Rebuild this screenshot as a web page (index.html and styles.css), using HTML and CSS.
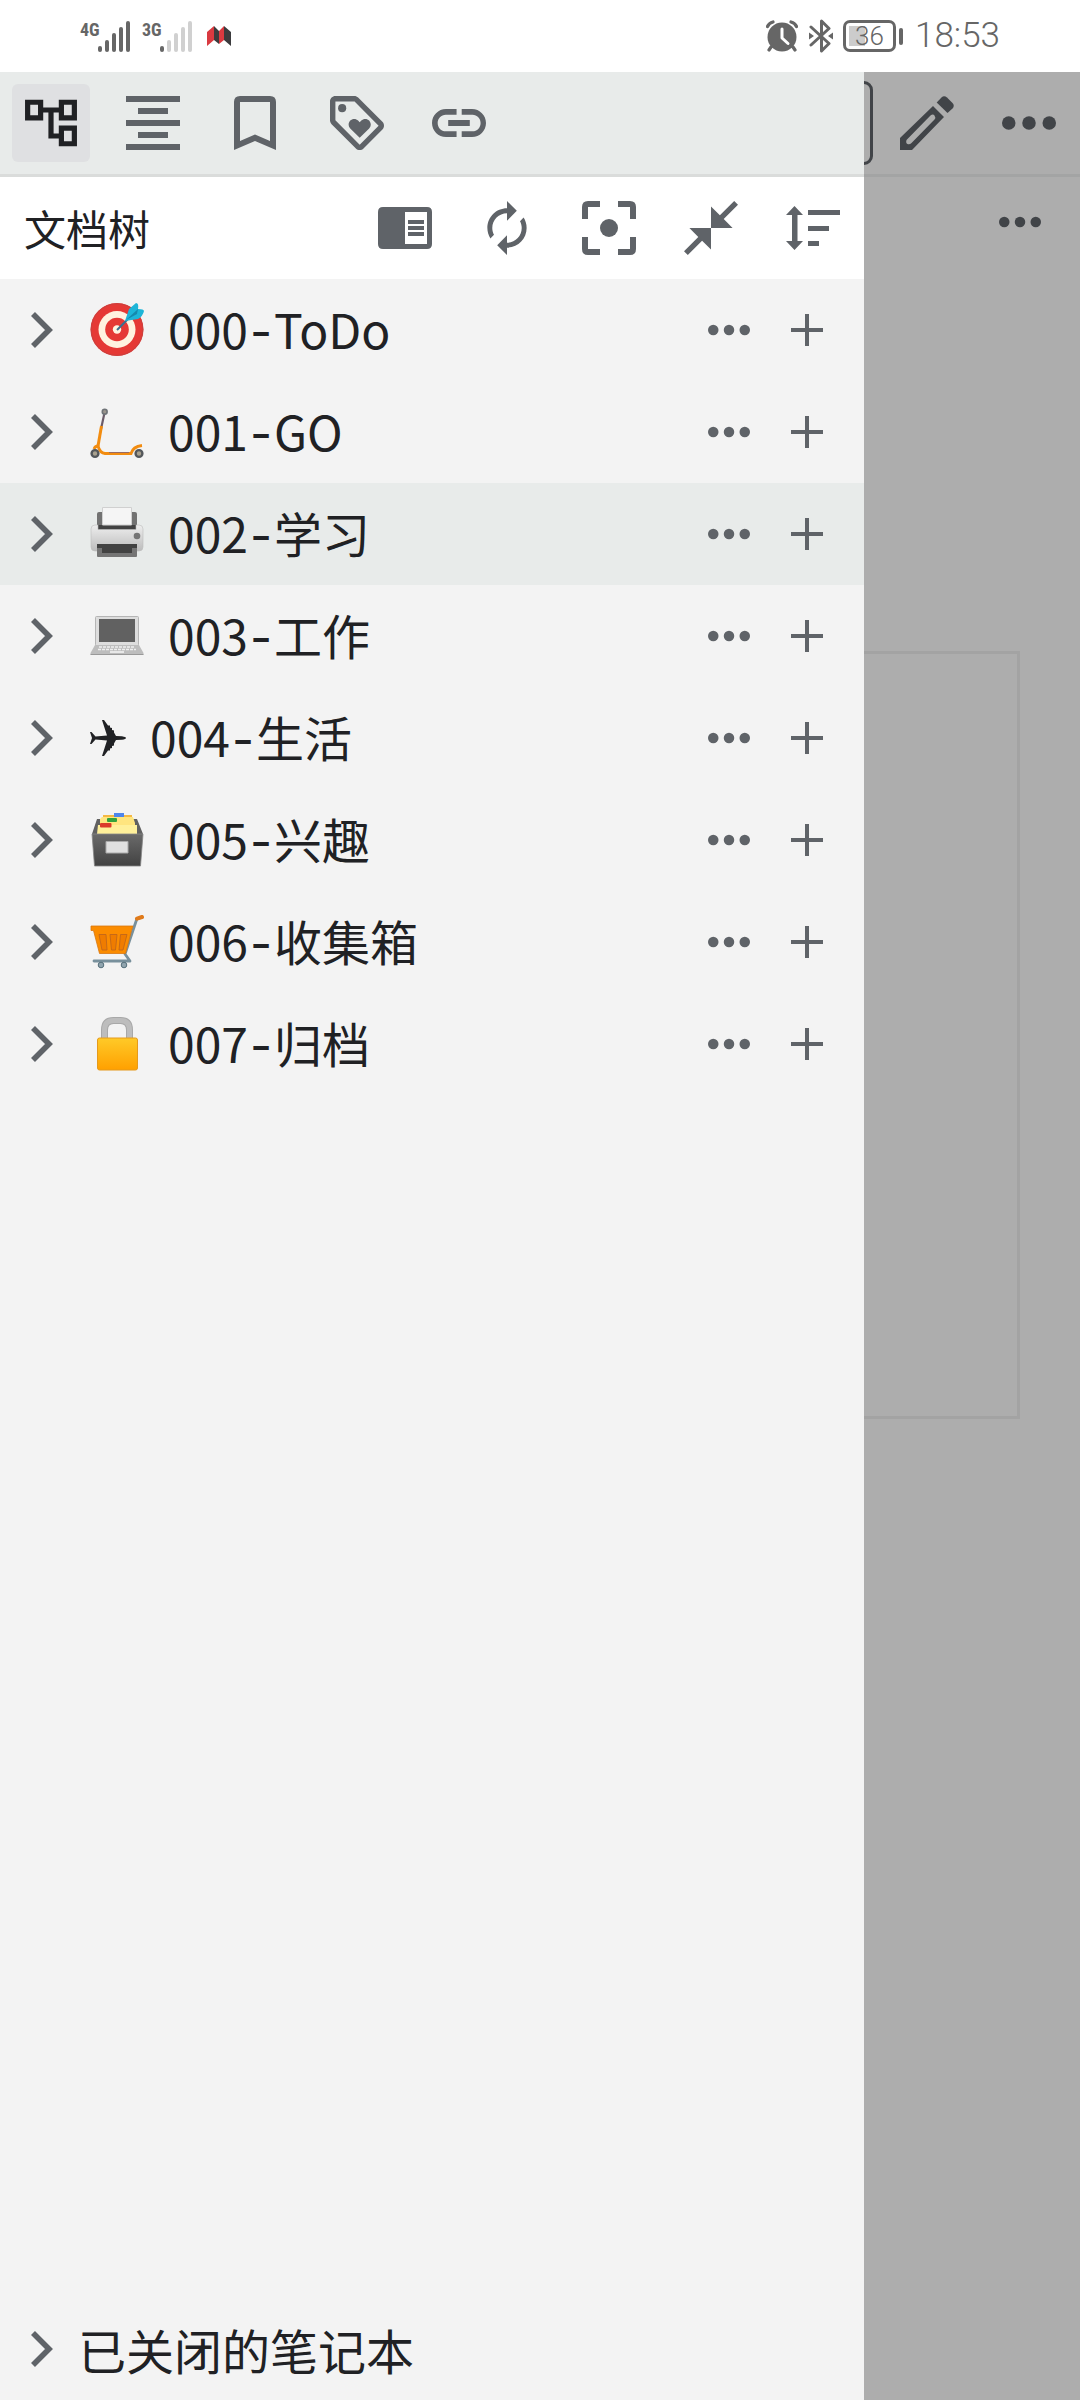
FILE: index.html
```html
<!DOCTYPE html>
<html lang="zh-CN">
<head>
<meta charset="utf-8">
<meta name="viewport" content="width=device-width">
<title>文档树</title>
<link rel="stylesheet" href="styles.css">
</head>
<body>
<svg class="defs" aria-hidden="true">
  <symbol id="chevron" viewBox="0 0 48 48"><path d="M15 8l16 16-16 16" fill="none" stroke="currentColor" stroke-width="5.6"/></symbol>
  <symbol id="dots" viewBox="0 0 54 54"><circle cx="6.75" cy="27" r="6.75"/><circle cx="27" cy="27" r="6.75"/><circle cx="47.25" cy="27" r="6.75"/></symbol>
  <symbol id="plus" viewBox="0 0 32 32"><path d="M14 0h4v14h14v4H18v14h-4V18H0v-4h14z"/></symbol>
</svg>

<header class="status">
  <div class="status-group">
    <span class="net">4G</span>
    <svg class="bars" viewBox="0 0 32 31"><g fill="#666"><rect y="25" width="4" height="6" rx="2"/><rect x="7" y="19" width="4" height="12" rx="2"/><rect x="14" y="12" width="4" height="19" rx="2"/><rect x="21" y="6" width="4" height="25" rx="2"/><rect x="28" width="4" height="31" rx="2"/></g></svg>
    <span class="net net-second">3G</span>
    <svg class="bars" viewBox="0 0 32 31"><rect y="25" width="4" height="6" rx="2" fill="#666"/><g fill="#d0d0d0"><rect x="7" y="19" width="4" height="12" rx="2"/><rect x="14" y="12" width="4" height="19" rx="2"/><rect x="21" y="6" width="4" height="25" rx="2"/><rect x="28" width="4" height="31" rx="2"/></g></svg>
    <svg class="brand" viewBox="0 0 24 20"><path d="M0 6l7-6v14l-7 6zM12 5l5-5v14l-5 4z" fill="#d93a40"/><path d="M7 0l5 5v13l-5-4zM17 0l7 6v14l-7-6z" fill="#3b3b3d"/></svg>
  </div>
  <div class="status-group">
    <svg class="alarm" viewBox="0 0 32 32"><circle cx="16" cy="17" r="14.5" fill="#666"/><path d="M5 27l-2 3M27 27l2 3M1.500 6.500Q3 3 7 2M30.500 6.500Q29 3 25 2" fill="none" stroke="#666" stroke-width="3.200" stroke-linecap="round"/><path d="M16 9v9l6 5.500" fill="none" stroke="#fff" stroke-width="3" stroke-linecap="round" stroke-linejoin="round"/></svg>
    <svg class="bluetooth" viewBox="0 0 24 34"><path d="M2 8l18 16.500-7.500 7.500V2L20 9.500 2 26" fill="none" stroke="#666" stroke-width="3" stroke-linejoin="round" stroke-linecap="round"/><path d="M0 13.500l5 3.500-5 3.500zM24 13.500L19 17l5 3.500z" fill="#666"/></svg>
    <span class="battery"><span class="battery-level">36</span></span>
    <time class="clock">18:53</time>
  </div>
</header>

<div class="app">
  <main class="editor">
    <div class="editor-bar">
      <input class="doc-title" type="text" aria-label="标题">
      <div class="tools">
        <button class="tool" aria-label="编辑"><svg class="icon" viewBox="0 0 54 54"><path fill-rule="evenodd" d="M0 42L33 10l11 11-32 33H0zM6.500 44q-1 3 1 4t4-1L34.500 23.500q1.500-2 0-4t-4 0z"/><path d="M36.700 6.500L41.500 1.500q2.500-2.500 5.500 0L52.500 7q2.500 2.500 0 5.500L47.500 17z"/></svg></button>
        <button class="tool" aria-label="更多"><svg class="icon"><use href="#dots"/></svg></button>
      </div>
    </div>
    <div class="crumbs"><button class="row-tool" aria-label="更多"><svg class="icon-more"><use href="#dots"/></svg></button></div>
    <div class="frame"></div>
  </main>

  <aside class="drawer">
    <nav class="tabs">
      <button class="tool tool-active" aria-label="文档树"><svg class="icon" viewBox="1.600 1.600 20.800 20.800"><path d="M22 11V3h-7v3H9V3H2v8h7V8h2v10h4v3h7v-8h-7v3h-2V8h2v3h7zM7 9H4V5h3v4zm10 6h3v4h-3v-4zm0-10h3v4h-3V5z"/></svg></button>
      <button class="tool" aria-label="大纲"><svg class="icon" viewBox="0 0 18 18"><path d="M0 0h18v2H0zM4 4h10v2H4zM0 8h18v2H0zM4 12h10v2H4zM0 16h18v2H0z"/></svg></button>
      <button class="tool" aria-label="书签"><svg class="icon" viewBox="0 0 54 54"><path fill-rule="evenodd" d="M12 0h30q6 0 6 6v48l-21-9-21 9V6q0-6 6-6zM12 6v39l15-6.500L42 45V6z"/></svg></button>
      <button class="tool" aria-label="标签"><svg class="icon" viewBox="2 2 20 20"><path d="M21.410 11.580l-9-9C12.050 2.220 11.550 2 11 2H4c-1.100 0-2 .9-2 2v7c0 .55.22 1.050.59 1.420l9 9c.36.36.86.58 1.410.58.55 0 1.050-.22 1.410-.59l7-7c.37-.36.59-.86.59-1.410 0-.55-.23-1.060-.59-1.420zM13 20.010L4 11V4h7v-.01l9 9-7 7.020z"/><circle cx="6.500" cy="6.500" r="1.500"/><path d="M8.900 12.550c0 .57.23 1.070.6 1.450l3.500 3.500 3.500-3.500c.37-.37.6-.89.6-1.450 0-1.130-.92-2.050-2.050-2.050-.57 0-1.080.23-1.450.6l-.6.6-.6-.59c-.37-.38-.89-.61-1.450-.61-1.130 0-2.050.92-2.050 2.050z"/></svg></button>
      <button class="tool" aria-label="反链"><svg class="icon" viewBox="2 2 20 20"><path d="M4.100 12c0-1.710 1.290-3.100 3-3.100h4V6.800H7.200c-2.900 0-5.200 2.340-5.200 5.200s2.300 5.200 5.200 5.200h3.900v-2.100h-4c-1.710 0-3-1.390-3-3.100zM8 13.100h8v-2.200H8v2.200zm8.800-6.300H13v2.100h4c1.710 0 3 1.390 3 3.100s-1.290 3.100-3 3.100h-4v2.100h3.800c2.900 0 5.200-2.340 5.200-5.200s-2.300-5.200-5.200-5.200z"/></svg></button>
    </nav>

    <div class="head">
      <h1 class="head-title">文档树</h1>
      <div class="tools">
        <button class="tool" aria-label="侧栏"><svg class="icon" viewBox="0 0 54 54"><path fill-rule="evenodd" d="M5 6h44q5 0 5 5v32q0 5-5 5H5q-5 0-5-5V11q0-5 5-5zM27 11v32h22V11z"/><path d="M30 19h16v4H30zM30 25h16v4H30zM30 31h16v4H30z"/></svg></button>
        <button class="tool" aria-label="刷新"><svg class="icon" viewBox="1 1 22 22"><path d="M12 6v3l4-4-4-4v3c-4.420 0-8 3.580-8 8 0 1.570.46 3.030 1.240 4.260L6.700 14.800c-.45-.83-.7-1.790-.7-2.800 0-3.310 2.690-6 6-6zm6.760 1.740L17.300 9.200c.44.84.7 1.790.7 2.800 0 3.310-2.690 6-6 6v-3l-4 4 4 4v-3c4.420 0 8-3.580 8-8 0-1.570-.46-3.030-1.240-4.260z"/></svg></button>
        <button class="tool" aria-label="定位"><svg class="icon" viewBox="3 3 18 18"><circle cx="12" cy="12" r="3"/><path d="M3 9V5q0-2 2-2h4v2H5v4zM15 3h4q2 0 2 2v4h-2V5h-4zM21 15v4q0 2-2 2h-4v-2h4v-4zM9 21H5q-2 0-2-2v-4h2v4h4z"/></svg></button>
        <button class="tool" aria-label="折叠"><svg class="icon" viewBox="2 2 20 20"><path d="M22 3.410L16.710 8.700 20 12h-8V4l3.290 3.290L20.590 2 22 3.410zM3.410 22l5.290-5.290L12 20v-8H4l3.290 3.290L2 20.590 3.410 22z"/></svg></button>
        <button class="tool" aria-label="排序"><svg class="icon" viewBox="0 0 54 54"><path d="M8.500 5l8.500 9h-5.500v26H17l-8.500 9L0 40h6V14H0zM22 9h32v5H22zM22 25h21v5H22zM22 40h11v5H22z"/></svg></button>
      </div>
    </div>

    <ul class="tree">
      <li class="row">
        <button class="toggle" aria-label="展开"><svg class="icon-chevron"><use href="#chevron"/></svg></button>
        <svg class="emoji" viewBox="0 0 54 54"><circle cx="27" cy="26.500" r="26.500" fill="#e53935"/><circle cx="27" cy="26.500" r="25.800" fill="none" stroke="#c9403e" stroke-width="1"/><circle cx="27" cy="26.500" r="18.500" fill="#fff3e0"/><circle cx="27" cy="26.500" r="11.800" fill="#e53935"/><circle cx="27" cy="26.500" r="4.200" fill="#fff3e0"/><path d="M27 27L39 15" stroke="#39708f" stroke-width="2"/><path d="M35 18l4-12 7-6q3 0 2 6 6 0 6 2-1 5-6 8z" fill="#1eb5d8"/><path d="M36 17L48 6l-1 5z" fill="#1689ad"/></svg>
        <span class="label">000<span class="dash">-</span>ToDo</span>
        <button class="row-tool" aria-label="更多"><svg class="icon-more"><use href="#dots"/></svg></button>
        <button class="row-tool" aria-label="新建"><svg class="icon-plus"><use href="#plus"/></svg></button>
      </li>
      <li class="row">
        <button class="toggle" aria-label="展开"><svg class="icon-chevron"><use href="#chevron"/></svg></button>
        <svg class="emoji" viewBox="0 0 54 54"><path d="M14.700 7L11 24" stroke="#6b5b68" stroke-width="2.200"/><circle cx="14.700" cy="6.700" r="3.200" fill="#6f7377"/><circle cx="14.700" cy="6.700" r="1.600" fill="#9a948c"/><g fill="none" stroke="#f28c10"><path d="M11.500 21L8 41" stroke-width="3"/><path d="M4 44q1-3 4-3 2 7 7 7.500h26q2-7 11-8" stroke-width="2.800"/></g><path d="M19 47.500h20" stroke="#9b6a60" stroke-width="1"/><g fill="#a9a18f" stroke="#53575b" stroke-width="2.400"><circle cx="5" cy="48.500" r="3.400"/><circle cx="49" cy="48.500" r="3.400"/></g></svg>
        <span class="label">001<span class="dash">-</span>GO</span>
        <button class="row-tool" aria-label="更多"><svg class="icon-more"><use href="#dots"/></svg></button>
        <button class="row-tool" aria-label="新建"><svg class="icon-plus"><use href="#plus"/></svg></button>
      </li>
      <li class="row row-current">
        <button class="toggle" aria-label="展开"><svg class="icon-chevron"><use href="#chevron"/></svg></button>
        <svg class="emoji" viewBox="0 0 54 54"><defs><linearGradient id="printer" x2="0" y2="1"><stop stop-color="#eee"/><stop offset="1" stop-color="#bcbcbc"/></linearGradient></defs><rect x="7" y="5" width="40" height="18" rx="2" fill="#727272"/><path d="M8 18h38v5H8z" fill="#424242"/><path d="M12.500.5h29V18h-29z" fill="#f5f5f5" stroke="#d0d0d0"/><path d="M5 18h3v4.500h38V18h3q4 0 4 4v18q0 4-4 4H5q-4 0-4-4V22q0-4 4-4z" fill="url(#printer)" stroke="#bdbdbd" stroke-width=".6"/><rect x="7" y="37" width="40" height="13" rx="1" fill="#757575"/><path d="M7 37h40v4h-5v5H12v-5H7z" fill="#424242"/><circle cx="47" cy="29" r="3.300" fill="#757575"/></svg>
        <span class="label">002<span class="dash">-</span>学习</span>
        <button class="row-tool" aria-label="更多"><svg class="icon-more"><use href="#dots"/></svg></button>
        <button class="row-tool" aria-label="新建"><svg class="icon-plus"><use href="#plus"/></svg></button>
      </li>
      <li class="row">
        <button class="toggle" aria-label="展开"><svg class="icon-chevron"><use href="#chevron"/></svg></button>
        <svg class="emoji" viewBox="0 0 54 54"><rect x="5.500" y="7.500" width="43" height="29" rx="1" fill="#ddd" stroke="#b5b5b5"/><path d="M9 10h36v23H9z" fill="#616161"/><path d="M5 36h44l4.500 8v1.500H.5V44z" fill="#bdbdbd"/><path d="M9 38h36M8 40.500h38" stroke="#eee" stroke-width="1.600" stroke-dasharray="3 1"/><path d="M20 43h14" stroke="#e8e8e8" stroke-width="2"/><path d="M.5 45.500h53" stroke="#999"/></svg>
        <span class="label">003<span class="dash">-</span>工作</span>
        <button class="row-tool" aria-label="更多"><svg class="icon-more"><use href="#dots"/></svg></button>
        <button class="row-tool" aria-label="新建"><svg class="icon-plus"><use href="#plus"/></svg></button>
      </li>
      <li class="row">
        <button class="toggle" aria-label="展开"><svg class="icon-chevron"><use href="#chevron"/></svg></button>
        <svg class="emoji-text" viewBox="0 0 36 36"><path fill="#202124" d="M0 12h1.500l4 4.500L17 15.500 12 0h2l4 5.500h2v2l2 .500v2l2 .500v2l2 3.500 6 .200q4 .8 4 1.800t-4 1.800l-6 .200-2 3.500v2l-2 .500v2l-2 .500v2h-2L14 36h-2l5-15.500-11.500-1-4 4.500H0l2-6z"/></svg>
        <span class="label">004<span class="dash">-</span>生活</span>
        <button class="row-tool" aria-label="更多"><svg class="icon-more"><use href="#dots"/></svg></button>
        <button class="row-tool" aria-label="新建"><svg class="icon-plus"><use href="#plus"/></svg></button>
      </li>
      <li class="row">
        <button class="toggle" aria-label="展开"><svg class="icon-chevron"><use href="#chevron"/></svg></button>
        <svg class="emoji" viewBox="0 0 54 54"><defs><linearGradient id="box" x2="0" y2="1"><stop stop-color="#6a6a6a"/><stop offset="1" stop-color="#424242"/></linearGradient></defs><path d="M7 6h40l6 15H2z" fill="#616161"/><path d="M13 2h29v6H13z" fill="#f5b942"/><rect x="24" y="0" width="10" height="4" fill="#4e86ec"/><path d="M10 6l2-2h31l2 6v5H10z" fill="#ffe57f"/><rect x="17" y="5" width="10" height="4" rx="1" fill="#33a23c"/><path d="M8 12h39v9H7z" fill="#fff09a"/><rect x="10" y="10" width="11.500" height="4.500" rx="1" fill="#db3b2a"/><path d="M2 21h51l-2.500 32h-46z" fill="url(#box)" stroke="#858585" stroke-width=".8"/><path d="M16 28.500h22V40H16z" fill="#e0e0e0" stroke="#aaa"/></svg>
        <span class="label">005<span class="dash">-</span>兴趣</span>
        <button class="row-tool" aria-label="更多"><svg class="icon-more"><use href="#dots"/></svg></button>
        <button class="row-tool" aria-label="新建"><svg class="icon-plus"><use href="#plus"/></svg></button>
      </li>
      <li class="row">
        <button class="toggle" aria-label="展开"><svg class="icon-chevron"><use href="#chevron"/></svg></button>
        <svg class="emoji" viewBox="0 0 54 54"><path d="M52 2.500l-5 1L35 39l5 7H4" fill="none" stroke="#78909c" stroke-width="2.800" stroke-linejoin="round" stroke-linecap="round"/><path d="M47 3.600l5-1.600" stroke="#e07a1a" stroke-width="4" stroke-linecap="round"/><path d="M1 11h42l-1.500 4.500L35.500 38.500H9.500L3.500 15.500H1z" fill="#fb8c00" stroke="#d87710" stroke-width=".8"/><path d="M9 19.500h7L17 35h-5zM20 19.500h7L25.500 35h-4zM30.500 19.500h6.500L33 35h-4z" fill="#ef7c00" stroke="#c2661a" stroke-width=".9"/><g fill="#90a4ae" stroke="#546e7a"><circle cx="11" cy="50" r="2.800"/><circle cx="34" cy="50" r="2.800"/></g></svg>
        <span class="label">006<span class="dash">-</span>收集箱</span>
        <button class="row-tool" aria-label="更多"><svg class="icon-more"><use href="#dots"/></svg></button>
        <button class="row-tool" aria-label="新建"><svg class="icon-plus"><use href="#plus"/></svg></button>
      </li>
      <li class="row">
        <button class="toggle" aria-label="展开"><svg class="icon-chevron"><use href="#chevron"/></svg></button>
        <svg class="emoji" viewBox="0 0 54 54"><defs><linearGradient id="lock" x2="0" y2="1"><stop stop-color="#ffca28"/><stop offset="1" stop-color="#ffa000"/></linearGradient></defs><path d="M14.500 22v-9q0-9.500 9-9.500h7q9 0 9 9.500v9" fill="none" stroke="#a8a8a8" stroke-width="7"/><path d="M14.500 22v-9q0-9.500 9-9.500h7q9 0 9 9.500v9" fill="none" stroke="#bdbdbd" stroke-width="5"/><rect x="7.500" y="21" width="40" height="32" rx="2" fill="url(#lock)" stroke="#e59a1c"/></svg>
        <span class="label">007<span class="dash">-</span>归档</span>
        <button class="row-tool" aria-label="更多"><svg class="icon-more"><use href="#dots"/></svg></button>
        <button class="row-tool" aria-label="新建"><svg class="icon-plus"><use href="#plus"/></svg></button>
      </li>
    </ul>

    <footer class="row row-closed">
      <button class="toggle" aria-label="展开"><svg class="icon-chevron"><use href="#chevron"/></svg></button>
      <span class="label">已关闭的笔记本</span>
    </footer>
  </aside>
</div>
</body>
</html>
```
FILE: styles.css
```css
* { box-sizing: border-box; }

body {
  margin: 0;
  min-height: 100vh;
  display: flex;
  flex-direction: column;
  background: #fff;
  color: #202124;
  font-family: "Noto Sans CJK SC", "Noto Sans", sans-serif;
}

button {
  margin: 0;
  padding: 0;
  border: 0;
  background: none;
  color: inherit;
  flex: none;
  display: flex;
  align-items: center;
  justify-content: center;
}

svg {
  display: block;
  flex: none;
  fill: currentColor;
}

.defs {
  position: absolute;
  width: 0;
  height: 0;
}

/* Status bar */
.status {
  height: 72px;
  padding: 0 80px;
  display: flex;
  align-items: center;
  justify-content: space-between;
  color: #666;
  font-family: Roboto, sans-serif;
}

.status-group {
  display: flex;
  align-items: center;
}

.net {
  width: 18px;
  height: 31px;
  font: bold 18px/18px "Liberation Sans Narrow", "Roboto Condensed", Roboto, sans-serif;
}

.net-second { margin-left: 12px; }

.bars {
  width: 32px;
  height: 31px;
}

.brand {
  width: 24px;
  height: 20px;
  margin-left: 15px;
}

.alarm {
  width: 32px;
  height: 32px;
}

.bluetooth {
  width: 24px;
  height: 34px;
  margin: 0 10px 0 11px;
}

.battery {
  display: flex;
  align-items: center;
  gap: 3px;
}

.battery::after {
  content: "";
  width: 4px;
  height: 17px;
  border-radius: 2px;
  background: #666;
}

.battery-level {
  width: 53px;
  height: 32px;
  border: 3px solid #666;
  border-radius: 7px;
  background: linear-gradient(#ccc, #ccc) 3px 3px / 16px 20px no-repeat;
  font-size: 26px;
  font-weight: 300;
  line-height: 27px;
  text-align: center;
}

.clock {
  margin-left: 12px;
  font-size: 35px;
  font-weight: 300;
  line-height: 40px;
}

/* App area: editor with the drawer above it */
.app {
  position: relative;
  flex: 1;
  display: flex;
  flex-direction: column;
}

.editor {
  flex: 1;
  background: #adadad;
  color: #414448;
}

.editor-bar {
  height: 105px;
  padding: 0 12px;
  display: flex;
  align-items: center;
  gap: 15px;
  border-bottom: 3px solid #a3a4a4;
}

.doc-title {
  flex: 1;
  min-width: 0;
  height: 84px;
  border: 3px solid #414448;
  border-radius: 9px;
  background: none;
}

.crumbs {
  height: 90px;
  padding: 0 33px;
  display: flex;
  align-items: center;
  justify-content: flex-end;
}

.frame {
  height: 768px;
  margin: 384px 60px 0;
  border: 3px solid #a3a3a3;
}

.drawer {
  position: absolute;
  inset: 0 auto 0 0;
  width: 80%;
  display: flex;
  flex-direction: column;
  background: #f3f3f3;
}

.tabs {
  height: 105px;
  padding: 0 12px;
  display: flex;
  align-items: center;
  gap: 24px;
  background: #e8ebea;
  border-bottom: 3px solid #dadcdb;
}

.tools {
  display: flex;
  gap: 24px;
}

.tool {
  width: 78px;
  height: 78px;
  border-radius: 6px;
}

.tabs, .head .tools { color: #5f6368; }

.tool-active {
  background: #dfe0e2;
  color: #202124;
}

.icon {
  width: 54px;
  height: 54px;
}

.head {
  height: 102px;
  padding: 0 12px 0 24px;
  display: flex;
  align-items: center;
  justify-content: space-between;
  background: #fff;
}

.head-title {
  margin: 0;
  font-size: 42px;
  font-weight: 400;
  line-height: 60px;
}

/* Tree */
.tree {
  flex: 1;
  margin: 0;
  padding: 0;
  list-style: none;
}

.row {
  height: 102px;
  padding: 0 30px 0 18px;
  display: flex;
  align-items: center;
  gap: 24px;
}

.row-current { background: #e8ebea; }

.row-closed { gap: 12px; }

.toggle {
  width: 48px;
  height: 48px;
  color: #5f6368;
}

.icon-chevron {
  width: 48px;
  height: 48px;
}

.emoji {
  width: 54px;
  height: 54px;
}

.emoji-text {
  width: 36px;
  height: 36px;
}

.label {
  flex: 1;
  font-size: 48px;
  line-height: 72px;
  white-space: nowrap;
}

.dash {
  padding: 0 2px;
  font-family: Inter, sans-serif;
}

.row-tool {
  width: 54px;
  height: 54px;
}

.row .row-tool { color: #5f6368; }

.icon-more {
  width: 42px;
  height: 42px;
}

.icon-plus {
  width: 32px;
  height: 32px;
}
```
